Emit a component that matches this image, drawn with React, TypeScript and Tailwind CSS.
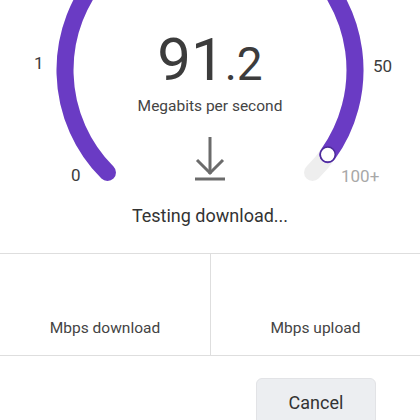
import React from "react";

const CX = 210;
const CY = 70;
const R = 145;

function pt(deg: number) {
  const a = (deg * Math.PI) / 180;
  return [CX + R * Math.cos(a), CY + R * Math.sin(a)];
}

function arc(from: number, to: number) {
  const [x1, y1] = pt(from);
  const [x2, y2] = pt(to);
  const large = to - from > 180 ? 1 : 0;
  return `M ${x1} ${y1} A ${R} ${R} 0 ${large} 1 ${x2} ${y2}`;
}

function Gauge() {
  const [kx, ky] = pt(395.7);
  return (
    <svg className="absolute left-0 top-0" width={420} height={200} viewBox="0 0 420 200">
      <path d={arc(135, 405)} fill="none" stroke="#eeeeee" strokeWidth={17} strokeLinecap="round" />
      <path d={arc(135, 395.7)} fill="none" stroke="#6a3bc4" strokeWidth={17} strokeLinecap="round" />
      <circle cx={kx} cy={ky} r={7.5} fill="#ffffff" stroke="#4b2a99" strokeWidth={1.5} />
    </svg>
  );
}

function DownloadIcon() {
  return (
    <svg width={30} height={44} viewBox="0 0 30 44" fill="none" stroke="#6b6b6b" strokeWidth={3}>
      <line x1={15} y1={0} x2={15} y2={37} />
      <polyline points="2,23 15,36 28,23" />
      <line x1={0} y1={42} x2={30} y2={42} />
    </svg>
  );
}

export default function App() {
  return (
    <div className="h-[420px] w-[420px] overflow-hidden bg-white font-['Roboto',sans-serif] text-[#3c3c3c]">
      <div className="relative h-[225px]">
        <Gauge />
        <span className="absolute left-[34px] top-[55px] text-[17px] leading-none">1</span>
        <span className="absolute left-[373px] top-[58px] text-[17px] leading-none">50</span>
        <span className="absolute left-[71px] top-[167px] text-[17px] leading-none">0</span>
        <span className="absolute left-[341px] top-[168px] text-[17px] leading-none text-[#a8a8a8]">100+</span>

        <div className="relative flex flex-col items-center pt-[30px]">
          <div className="flex items-baseline leading-none">
            <span className="text-[60px] leading-none">91</span>
            <span className="text-[46px] leading-none">.2</span>
          </div>
          <div className="mt-[9px] text-[15.5px] leading-none text-[#444]">Megabits per second</div>
          <div className="mt-[22px]">
            <DownloadIcon />
          </div>
          <div className="mt-[26px] text-[18px] leading-none text-[#333]">Testing download...</div>
        </div>
      </div>

      <div className="mt-[28px] grid h-[103px] grid-cols-2 border-y border-[#dedede]">
        <div className="flex items-end justify-center pb-[19px] text-[15.5px] leading-none text-[#444]">
          Mbps download
        </div>
        <div className="flex items-end justify-center border-l border-[#dedede] pb-[19px] text-[15.5px] leading-none text-[#444]">
          Mbps upload
        </div>
      </div>

      <div className="mt-[22px] flex justify-end pr-[44px]">
        <button className="h-12 w-[120px] rounded-md border border-[#e2e3e6] bg-[#eceef1] text-[18px] text-[#333]">
          Cancel
        </button>
      </div>
    </div>
  );
}
